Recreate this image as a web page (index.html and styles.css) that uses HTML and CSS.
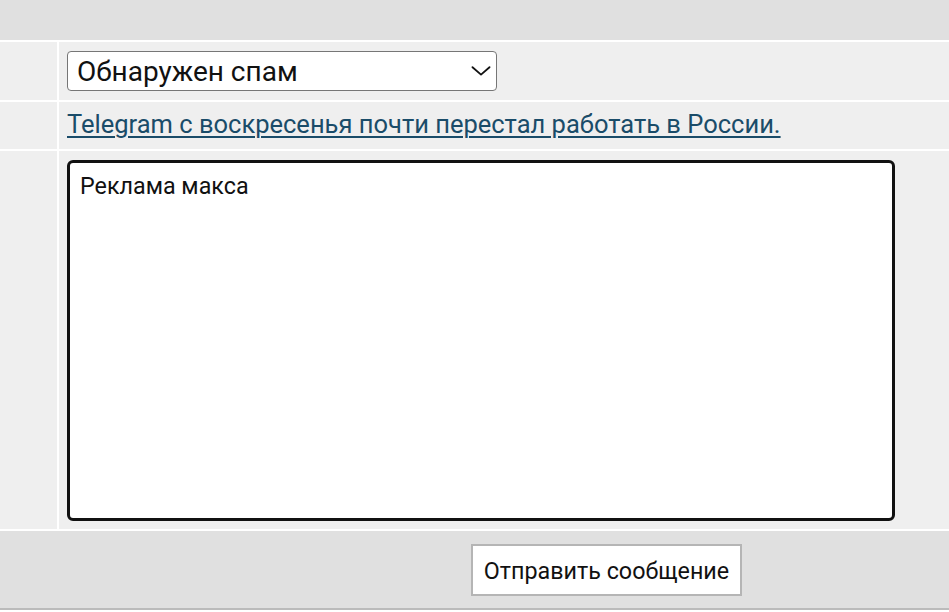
FILE: index.html
```html
<!DOCTYPE html>
<html lang="ru">
<head>
  <meta charset="UTF-8">
  <meta name="viewport" content="width=device-width, initial-scale=1.0">
  <title>Жалоба на сообщение</title>
  <link rel="stylesheet" href="styles.css">
</head>
<body>
  <form class="report" onsubmit="return false">
    <table class="grid">
      <tr class="head">
        <td colspan="2"></td>
      </tr>
      <tr class="reason">
        <td class="side"></td>
        <td>
          <span class="select-wrap">
            <select name="reason">
              <option>Обнаружен спам</option>
              <option>Оскорбления</option>
              <option>Другое</option>
            </select>
            <svg class="chevron" viewBox="0 0 20 10" fill="none">
              <path d="M1.5 1.2 L10 8.6 L18.5 1.2" stroke="#111" stroke-width="1.8" stroke-linecap="round" stroke-linejoin="round"/>
            </svg>
          </span>
        </td>
      </tr>
      <tr class="topic">
        <td class="side"></td>
        <td><a href="#">Telegram с воскресенья почти перестал работать в России.</a></td>
      </tr>
      <tr class="message">
        <td class="side"></td>
        <td><textarea name="message">Реклама макса</textarea></td>
      </tr>
      <tr class="foot">
        <td colspan="2">
          <div class="actions">
            <button type="submit">Отправить сообщение</button>
          </div>
        </td>
      </tr>
    </table>
  </form>
</body>
</html>
```

FILE: styles.css
```css
* {
  box-sizing: border-box;
}

body {
  margin: 0;
  background-color: #fff;
  font-family: Roboto, 'Noto Sans', sans-serif;
  color: #111;
  overflow: hidden;
}

.grid {
  border-collapse: separate;
  border-spacing: 2px;
  width: calc(100% + 4px);
  margin: -2px -2px 0;
}

.grid td {
  background-color: #efefef;
  padding: 0 0 0 8px;
  vertical-align: middle;
}

.grid td.side {
  width: 57px;
  padding: 0;
}

.head td {
  height: 40px;
  background-color: #e0e0e0;
}

.reason td {
  height: 58px;
}

.topic td {
  height: 47px;
  padding-bottom: 3px;
}

.message td {
  height: 378px;
  padding-top: 9px;
  padding-bottom: 8px;
  vertical-align: top;
}

.foot td {
  height: 79px;
  padding: 0;
  background-color: #e0e0e0;
  border-bottom: 2px solid #bbb;
}

/* select with its own arrow */
.select-wrap {
  position: relative;
  display: inline-block;
}

select {
  appearance: none;
  -webkit-appearance: none;
  display: block;
  width: 430px;
  height: 40px;
  padding: 0 40px 0 9px;
  font-family: Roboto, sans-serif;
  font-size: 28px;
  color: #111;
  background-color: #fff;
  border: 1px solid #767676;
  border-radius: 4px;
}

.chevron {
  position: absolute;
  right: 6px;
  top: 15px;
  width: 20px;
  height: 10px;
  pointer-events: none;
}

a {
  font-size: 25.5px;
  color: #1a4c69;
  text-decoration: underline;
  text-decoration-thickness: 1.5px;
  text-underline-offset: 3px;
}

textarea {
  display: block;
  width: 828px;
  height: 361px;
  padding: 10px 10px;
  font-family: Roboto, sans-serif;
  font-size: 23.3px;
  line-height: 1.2;
  color: #111;
  background-color: #fff;
  border: 3px solid #111;
  border-radius: 6px;
  resize: none;
  outline: none;
}

.actions {
  display: flex;
  align-items: center;
  padding: 0 0 0 471px;
}

button {
  width: 271px;
  height: 52px;
  padding: 3px 0 0;
  font-family: Roboto, sans-serif;
  font-size: 23.3px;
  color: #111;
  background-color: #fff;
  border: 2px solid #b5b5b5;
  border-radius: 0;
  cursor: pointer;
}
```
